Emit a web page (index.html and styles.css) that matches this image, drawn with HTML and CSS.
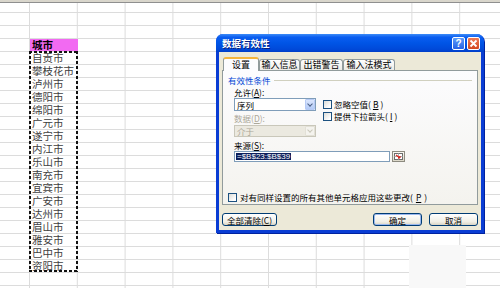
FILE: index.html
```html
<!DOCTYPE html>
<html lang="zh-CN">
  <head>
    <meta charset="UTF-8" />
    <meta name="viewport" content="width=device-width, initial-scale=1.0" />
    <title>数据有效性</title>
    <link rel="stylesheet" href="styles.css">
  </head>
  <body>
    <div id="sheet">
      <div class="colhead"></div>
      <div class="col-b">
        <div class="cell head">城市</div>
        <div class="items">
          <div class="cell">自贡市</div>
          <div class="cell">攀枝花市</div>
          <div class="cell">泸州市</div>
          <div class="cell">德阳市</div>
          <div class="cell">绵阳市</div>
          <div class="cell">广元市</div>
          <div class="cell">遂宁市</div>
          <div class="cell">内江市</div>
          <div class="cell">乐山市</div>
          <div class="cell">南充市</div>
          <div class="cell">宜宾市</div>
          <div class="cell">广安市</div>
          <div class="cell">达州市</div>
          <div class="cell">眉山市</div>
          <div class="cell">雅安市</div>
          <div class="cell">巴中市</div>
          <div class="cell">资阳市</div>
        </div>
      </div>
      <div class="patch"></div>

      <div class="dialog">
        <div class="titlebar">
          <span class="title">数据有效性</span>
          <div class="tb-buttons">
            <span class="tb-btn help">?</span>
            <span class="tb-btn close">
              <svg width="9" height="9" viewBox="0 0 9 9"><path d="M1.5 1.5 L7.5 7.5 M7.5 1.5 L1.5 7.5" stroke="#fff" stroke-width="1.8" /></svg>
            </span>
          </div>
        </div>
        <div class="body">
          <div class="tabs">
            <span class="tab active">设置</span>
            <span class="tab t2">输入信息</span>
            <span class="tab t3">出错警告</span>
            <span class="tab t4">输入法模式</span>
          </div>
          <div class="panel">
            <div class="group">有效性条件</div>
            <div class="criteria">
              <div class="left">
                <div class="label">允许(<u>A</u>):</div>
                <div class="select"><span class="val">序列</span><span class="arrow"></span></div>
                <div class="label dim gap">数据(<u>D</u>):</div>
                <div class="select disabled"><span class="val">介于</span><span class="arrow"></span></div>
              </div>
              <div class="checks">
                <div class="check"><span class="box"></span>忽略空值(<u>B</u>)</div>
                <div class="check"><span class="box"></span>提供下拉箭头(<u>I</u>)</div>
              </div>
            </div>
            <div class="label src-label">来源(<u>S</u>):</div>
            <div class="source">
              <div class="input"><span class="sel">=$B$23:$B$39</span></div>
              <span class="ref-btn">
                <svg width="9" height="7" viewBox="0 0 9 7">
                  <rect x="0.5" y="0.5" width="8" height="6" fill="#fff" stroke="#6d6d6d" />
                  <path d="M0.5 3.5 H8.5 M4.5 0.5 V6.5" stroke="#b0b0b0" />
                  <path d="M2 2 L6 5 M6 5 V3 M6 5 H4" stroke="#d9241b" stroke-width="1.2" fill="none" />
                </svg>
              </span>
            </div>
            <div class="check apply"><span class="box"></span>对有同样设置的所有其他单元格应用这些更改(<u>P</u>)</div>
          </div>
          <div class="actions">
            <button class="btn wide">全部清除(<u>C</u>)</button>
            <span class="spacer"></span>
            <button class="btn default">确定</button>
            <button class="btn">取消</button>
          </div>
        </div>
      </div>
    </div>
  </body>
</html>
```

FILE: styles.css
```css
body {
  margin: 0;
  overflow: hidden;
  font-family: "Noto Sans CJK SC", "Liberation Sans", sans-serif;
}
#sheet {
  position: relative;
  width: 500px;
  height: 288px;
  background-color: #fff;
  background-image:
    linear-gradient(to right, #dcdcdc 1px, transparent 1px),
    linear-gradient(to bottom, #dcdcdc 1px, transparent 1px);
  background-size: 47.8px 100%, 100% 13px;
  background-position: 29px 0, 0 12px;
  overflow: hidden;
}
.colhead {
  height: 2px;
  background: #d9d6cc;
  border-bottom: 1px solid #8f8f8f;
}
.col-b {
  width: 49px;
  margin: 36px 0 0 29px;
}
.cell {
  height: 13px;
  padding-left: 3px;
  font-size: 10.5px;
  line-height: 13px;
  color: #404040;
  white-space: nowrap;
}
.cell.head {
  height: 12px;
  line-height: 12px;
  margin-left: 1px;
  padding-left: 2px;
  font-weight: bold;
  color: #000;
  background: #f26af2;
}
.items {
  position: relative;
}
.items::after {
  content: "";
  position: absolute;
  inset: 0;
  background:
    repeating-linear-gradient(90deg, #111 0 3px, transparent 3px 5px) top / 100% 2px no-repeat,
    repeating-linear-gradient(90deg, #111 0 3px, transparent 3px 5px) bottom / 100% 2px no-repeat,
    repeating-linear-gradient(180deg, #111 0 3px, transparent 3px 5px) left / 2px 100% no-repeat,
    repeating-linear-gradient(180deg, #111 0 3px, transparent 3px 5px) right / 2px 100% no-repeat;
}
.patch {
  position: absolute;
  left: 409px;
  top: 245px;
  width: 57px;
  height: 43px;
  background: #f8f8f8;
}

/* dialog window */
.dialog {
  position: absolute;
  left: 216px;
  top: 34px;
  width: 268px;
  height: 199px;
  box-sizing: border-box;
  padding: 0 3px 3px;
  display: flex;
  flex-direction: column;
  background: #0a3dd4;
  border-radius: 7px 7px 0 0;
  box-shadow: 1px 1px 0 #0022a0;
}
.titlebar {
  height: 18px;
  margin: 0 -3px;
  padding: 0 4px 0 6px;
  display: flex;
  align-items: center;
  justify-content: space-between;
  border-radius: 7px 7px 0 0;
  background: linear-gradient(#3d8cf7, #0a5df0 18%, #0055e6 50%, #0049d9 85%, #003ec8);
}
.title {
  color: #fff;
  font-size: 9.5px;
  font-weight: bold;
  text-shadow: 1px 1px 0 #0a1e7a;
}
.tb-buttons {
  display: flex;
  gap: 2px;
}
.tb-btn {
  width: 13px;
  height: 13px;
  box-sizing: border-box;
  border: 1px solid #fff;
  border-radius: 2px;
  display: flex;
  align-items: center;
  justify-content: center;
  color: #fff;
  font: bold 10px "Liberation Sans", sans-serif;
}
.help {
  background: linear-gradient(#5d9cfa, #2662e6);
}
.close {
  background: linear-gradient(#ee7a55, #d2461f);
}
.body {
  flex: 1;
  padding: 5px 3px 0;
  background: #ece9d8;
  font-size: 8.5px;
  color: #000;
}
.tabs {
  height: 13px;
  padding-left: 1px;
  display: flex;
  align-items: flex-end;
}
.tab {
  position: relative;
  height: 11px;
  box-sizing: border-box;
  border: 1px solid #919b9c;
  border-bottom: none;
  border-radius: 3px 3px 0 0;
  background: linear-gradient(#fff, #ecebe6);
  font-size: 9px;
  line-height: 10px;
  text-align: center;
}
.tab.active {
  width: 36px;
  height: 14px;
  margin-bottom: -1px;
  z-index: 1;
  line-height: 12px;
  border-top: 2px solid #f5b53c;
  background: #fcfcfe;
}
.t2 { width: 41px; }
.t3 { width: 43px; }
.t4 { width: 52px; }
.panel {
  height: 135px;
  box-sizing: border-box;
  padding: 4px 5px 2px;
  display: flex;
  flex-direction: column;
  border: 1px solid #919b9c;
  background: linear-gradient(#fcfcfe, #f4f3ee);
}
.group {
  display: flex;
  align-items: center;
  line-height: 10px;
  color: #0046d5;
}
.group::after {
  content: "";
  flex: 1;
  height: 1px;
  margin: 0 0 0 3px;
  background: #d0d0bf;
}
.label {
  line-height: 10px;
}
.dim {
  color: #aca899;
}
.gap {
  margin-top: 2px;
}
.criteria {
  display: flex;
  margin: 2px 0 0 6px;
}
.left {
  width: 82px;
}
.select {
  height: 13px;
  margin-top: 1px;
  box-sizing: border-box;
  display: flex;
  align-items: center;
  border: 1px solid #7f9db9;
  background: #fff;
}
.select .val {
  flex: 1;
  padding-left: 2px;
  line-height: 10px;
}
.select .arrow {
  width: 10px;
  height: 100%;
  box-sizing: border-box;
  border: 1px solid #b7cbf5;
  border-radius: 1px;
  background: linear-gradient(#dbe6fd, #b4cbf7);
  display: flex;
  align-items: center;
  justify-content: center;
}
.select .arrow::after {
  content: "";
  width: 3px;
  height: 3px;
  margin-top: -2px;
  border-right: 1.5px solid #4d6185;
  border-bottom: 1.5px solid #4d6185;
  transform: rotate(45deg);
}
.select.disabled {
  height: 12px;
  margin-top: 2px;
  border-color: #c9c7ba;
  background: #ebe9e0;
  color: #aca899;
}
.select.disabled .arrow {
  border-color: #e2e0d6;
  background: #f4f3ee;
}
.select.disabled .arrow::after {
  border-color: #c9c7ba;
}
.checks {
  margin-left: 7px;
  padding-top: 11px;
}
.check {
  height: 12px;
  display: flex;
  align-items: center;
  gap: 2px;
  white-space: nowrap;
}
.box {
  width: 9px;
  height: 9px;
  box-sizing: border-box;
  border: 1px solid #1c5180;
  background: linear-gradient(135deg, #dcdcd7, #fff 80%);
}
.src-label {
  margin: 3px 0 0 6px;
}
.source {
  display: flex;
  margin: 1px 0 0 6px;
}
.input {
  width: 156px;
  height: 11px;
  box-sizing: border-box;
  padding: 1px;
  border: 1px solid #7f9db9;
  background: #fff;
}
.sel {
  display: inline-block;
  height: 7px;
  padding: 0 1px;
  background: #0c1f5c;
  color: #fff;
  font: 8px/7px "Liberation Sans", sans-serif;
  vertical-align: top;
}
.ref-btn {
  width: 13px;
  height: 11px;
  margin-left: 2px;
  box-sizing: border-box;
  border: 1px solid #8d8b80;
  background: linear-gradient(#faf9f4, #dcd8c8);
  display: flex;
  align-items: center;
  justify-content: center;
}
.apply {
  margin-top: auto;
  height: 10px;
  gap: 3px;
}
.actions {
  display: flex;
  gap: 7px;
  margin-top: 8px;
}
.spacer {
  flex: 1;
}
.btn {
  width: 49px;
  height: 13px;
  padding: 0;
  border: 1px solid #003c74;
  border-radius: 3px;
  background: linear-gradient(#fff, #f1efe6 70%, #d8d3c4);
  font: 8.5px/10px "Noto Sans CJK SC", "Liberation Sans", sans-serif;
  color: #000;
}
.btn.wide {
  width: 55px;
}
.btn.default {
  box-shadow: inset 0 0 0 1px #9bb8ee;
}
```
